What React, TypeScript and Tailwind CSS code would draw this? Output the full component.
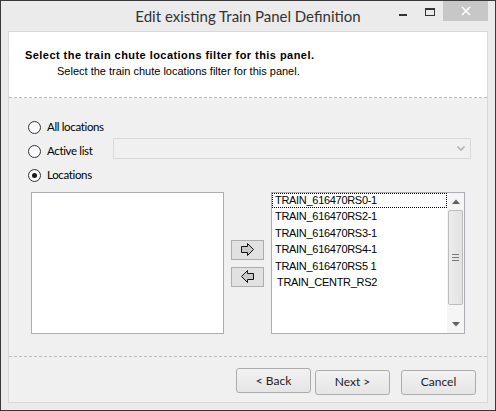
import React from 'react';

const items = [
  'TRAIN_616470RS0-1',
  'TRAIN_616470RS2-1',
  'TRAIN_616470RS3-1',
  'TRAIN_616470RS4-1',
  'TRAIN_616470RS5 1',
  'TRAIN_CENTR_RS2',
];

function Radio({ checked, label }: { checked?: boolean; label: string }) {
  return (
    <div className="flex items-center w-[85px] shrink-0">
      <span className="w-[13px] h-[13px] rounded-full border border-[#333] bg-gradient-to-b from-[#f4f4f4] to-[#ffffff] flex items-center justify-center">
        {checked && <span className="w-[5px] h-[5px] rounded-full bg-[#1a1a1a]" />}
      </span>
      <span className="ml-[6px] text-[11.5px] tracking-[-0.35px] leading-none text-black whitespace-nowrap">{label}</span>
    </div>
  );
}

function ArrowButton({ dir }: { dir: 'right' | 'left' }) {
  return (
    <button className="w-[33px] h-[20px] border border-[#adadad] bg-[#e1e1e1] flex items-center justify-center">
      <svg width="13" height="13" viewBox="0 0 13 13">
        {dir === 'right' ? (
          <polygon points="0.5,3.5 6.5,3.5 6.5,0.5 12.5,6.5 6.5,12.5 6.5,9.5 0.5,9.5" fill="#c9c9c9" stroke="#111" strokeWidth="1" />
        ) : (
          <polygon points="12.5,3.5 6.5,3.5 6.5,0.5 0.5,6.5 6.5,12.5 6.5,9.5 12.5,9.5" fill="#c9c9c9" stroke="#111" strokeWidth="1" />
        )}
      </svg>
    </button>
  );
}

function WizButton({ label }: { label: string }) {
  return (
    <button className="w-[75px] h-[25px] rounded-[3px] border border-[#acacac] bg-gradient-to-b from-[#f2f2f2] to-[#e5e5e5] text-[12px] text-[#222]">
      {label}
    </button>
  );
}

export default function App() {
  return (
    <div className="w-[496px] h-[411px] border border-[#383838] bg-[#ebebeb] flex flex-col overflow-hidden font-['Lato',sans-serif]">
      {/* title bar */}
      <div className="h-[30px] shrink-0 relative flex items-center justify-center">
        <span className="text-[15px] text-[#333] leading-none">Edit existing Train Panel Definition</span>
        <div className="absolute right-[7px] top-0 flex items-start">
          <span className="mt-[13px] w-[8px] h-[2px] bg-[#333]" />
          <span className="mt-[7px] ml-[18px] w-[10px] h-[8px] border border-t-2 border-[#333]" />
          <div className="ml-[8px] w-[45px] h-[20px] bg-[#c7c7c7] flex items-center justify-center">
            <svg width="10" height="10" viewBox="0 0 10 10">
              <path d="M1 1 L9 9 M9 1 L1 9" stroke="#fff" strokeWidth="1.6" />
            </svg>
          </div>
        </div>
      </div>

      {/* client area */}
      <div className="mx-[7px] mb-[7px] flex-1 border border-[#d9d9d9] flex flex-col bg-[#f0f0f0]">
        <div className="h-[66px] shrink-0 bg-white border-b border-dashed border-[#bdbdbd] pt-[15px] font-['Liberation_Sans',sans-serif] text-[11px] leading-[16px] text-black">
          <div className="pl-[16px] font-bold tracking-[0.45px]">Select the train chute locations filter for this panel.</div>
          <div className="pl-[48px]">Select the train chute locations filter for this panel.</div>
        </div>

        <div className="h-[259px] shrink-0 border-b border-dashed border-[#bdbdbd] pt-[17px] pl-[19px]">
          <div className="h-[24px] flex items-center">
            <Radio label="All locations" />
          </div>
          <div className="h-[24px] flex items-center">
            <Radio label="Active list" />
            <div className="self-start -mt-[1px] w-[358px] h-[21px] border border-[#d9d9d9] bg-[#f0f0f0] flex items-center justify-end pr-[5px]">
              <svg width="8" height="5" viewBox="0 0 8 5">
                <path d="M0.5 0.5 L4 4 L7.5 0.5" fill="none" stroke="#b5b5b5" strokeWidth="1.6" />
              </svg>
            </div>
          </div>
          <div className="h-[24px] flex items-center">
            <Radio checked label="Locations" />
          </div>

          <div className="mt-[5px] pl-[3px] flex items-center gap-[7px]">
            <div className="w-[193px] h-[142px] border border-[#abadb3] bg-white" />
            <div className="flex flex-col gap-[7px]">
              <ArrowButton dir="right" />
              <ArrowButton dir="left" />
            </div>
            <div className="w-[194px] h-[142px] border border-[#abadb3] bg-white flex font-['Liberation_Sans',sans-serif] text-[11px] tracking-[-0.3px] text-black">
              <div className="flex-1 flex flex-col">
                {items.map((it, i) => (
                  <div
                    key={it}
                    className={
                      i === 0
                        ? 'h-[15px] flex items-center pl-[2px] border border-dotted border-black'
                        : i === items.length - 1
                        ? 'h-[16.6px] flex items-center pl-[5px]'
                        : 'h-[16.6px] flex items-center pl-[3px]'
                    }
                  >
                    {it}
                  </div>
                ))}
              </div>
              <div className="w-[17px] bg-[#f5f5f5] flex flex-col items-center">
                <div className="h-[17px] flex items-center justify-center">
                  <svg width="8" height="5" viewBox="0 0 8 5">
                    <polygon points="0,5 4,0.5 8,5" fill="#606060" />
                  </svg>
                </div>
                <div className="w-[15px] h-[95px] rounded-[2px] border border-[#bcbcbc] bg-gradient-to-r from-[#ececec] to-[#e2e2e2] flex flex-col items-center justify-center gap-[2px]">
                  <span className="w-[7px] h-px bg-[#7a7a7a]" />
                  <span className="w-[7px] h-px bg-[#7a7a7a]" />
                  <span className="w-[7px] h-px bg-[#7a7a7a]" />
                </div>
                <div className="flex-1 flex items-end justify-center pb-[6px]">
                  <svg width="8" height="5" viewBox="0 0 8 5">
                    <polygon points="0,0 8,0 4,4.5" fill="#606060" />
                  </svg>
                </div>
              </div>
            </div>
          </div>
        </div>

        <div className="flex-1 flex justify-end items-start pt-[11px] pr-[11px]">
          <WizButton label="< Back" />
          <div className="ml-[4px]">
            <WizButton label="Next >" />
          </div>
          <div className="ml-[11px]">
            <WizButton label="Cancel" />
          </div>
        </div>
      </div>
    </div>
  );
}
